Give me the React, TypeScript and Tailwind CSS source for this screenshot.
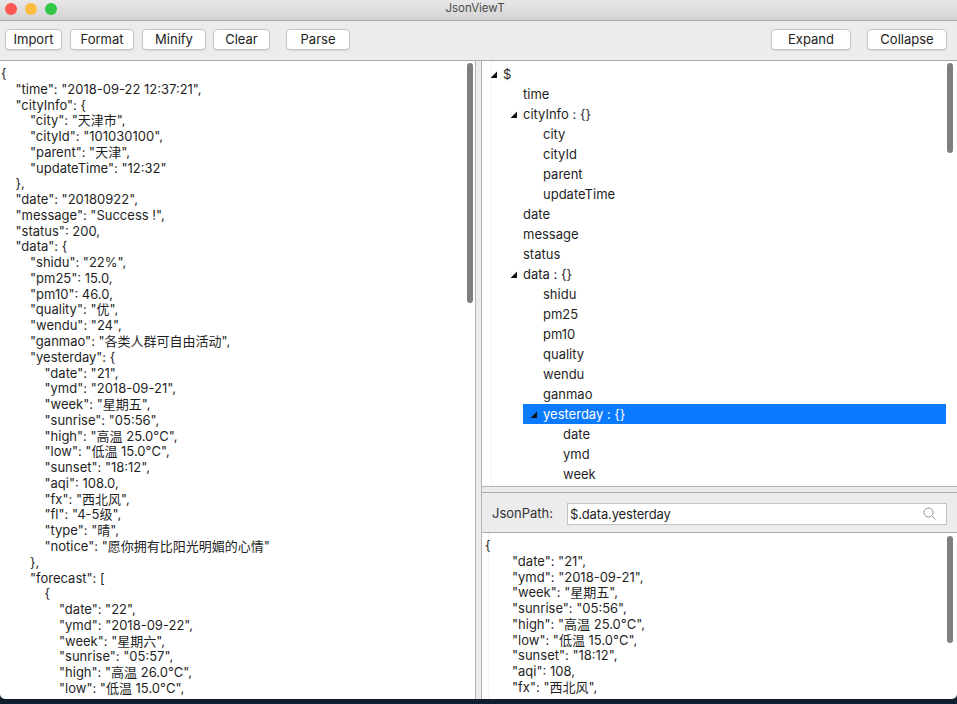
const font = "[font-family:'Inter','Noto_Sans_CJK_SC',sans-serif]";

const leftLines: [number, string][] = [
  [0, "{"],
  [1, '"time": "2018-09-22 12:37:21",'],
  [1, '"cityInfo": {'],
  [2, '"city": "天津市",'],
  [2, '"cityId": "101030100",'],
  [2, '"parent": "天津",'],
  [2, '"updateTime": "12:32"'],
  [1, "},"],
  [1, '"date": "20180922",'],
  [1, '"message": "Success !",'],
  [1, '"status": 200,'],
  [1, '"data": {'],
  [2, '"shidu": "22%",'],
  [2, '"pm25": 15.0,'],
  [2, '"pm10": 46.0,'],
  [2, '"quality": "优",'],
  [2, '"wendu": "24",'],
  [2, '"ganmao": "各类人群可自由活动",'],
  [2, '"yesterday": {'],
  [3, '"date": "21",'],
  [3, '"ymd": "2018-09-21",'],
  [3, '"week": "星期五",'],
  [3, '"sunrise": "05:56",'],
  [3, '"high": "高温 25.0°C",'],
  [3, '"low": "低温 15.0°C",'],
  [3, '"sunset": "18:12",'],
  [3, '"aqi": 108.0,'],
  [3, '"fx": "西北风",'],
  [3, '"fl": "4-5级",'],
  [3, '"type": "晴",'],
  [3, '"notice": "愿你拥有比阳光明媚的心情"'],
  [2, "},"],
  [2, '"forecast": ['],
  [3, "{"],
  [4, '"date": "22",'],
  [4, '"ymd": "2018-09-22",'],
  [4, '"week": "星期六",'],
  [4, '"sunrise": "05:57",'],
  [4, '"high": "高温 26.0°C",'],
  [4, '"low": "低温 15.0°C",'],
];

const treeRows: { depth: number; label: string; open?: boolean; selected?: boolean }[] = [
  { depth: 0, label: "$", open: true },
  { depth: 1, label: "time" },
  { depth: 1, label: "cityInfo : {}", open: true },
  { depth: 2, label: "city" },
  { depth: 2, label: "cityId" },
  { depth: 2, label: "parent" },
  { depth: 2, label: "updateTime" },
  { depth: 1, label: "date" },
  { depth: 1, label: "message" },
  { depth: 1, label: "status" },
  { depth: 1, label: "data : {}", open: true },
  { depth: 2, label: "shidu" },
  { depth: 2, label: "pm25" },
  { depth: 2, label: "pm10" },
  { depth: 2, label: "quality" },
  { depth: 2, label: "wendu" },
  { depth: 2, label: "ganmao" },
  { depth: 2, label: "yesterday : {}", open: true, selected: true },
  { depth: 3, label: "date" },
  { depth: 3, label: "ymd" },
  { depth: 3, label: "week" },
];

const pathLines = [
  "{",
  '"date": "21",',
  '"ymd": "2018-09-21",',
  '"week": "星期五",',
  '"sunrise": "05:56",',
  '"high": "高温 25.0°C",',
  '"low": "低温 15.0°C",',
  '"sunset": "18:12",',
  '"aqi": 108,',
  '"fx": "西北风",',
];

const ToolButton = ({ label, width, className = "" }: { label: string; width: string; className?: string }) => (
  <button
    className={`${width} ${className} h-[21px] shrink-0 rounded-[4px] border border-[#c4c4c4] bg-white text-[13px] leading-[19px] text-[#222] shadow-[0_1px_1px_rgba(0,0,0,0.08)]`}
  >
    {label}
  </button>
);

const Scrollbar = ({ height, top, right }: { height: string; top: string; right: string }) => (
  <div className={`absolute ${right} ${top} ${height} w-[6px] rounded-full bg-[#7f7f7f]`} />
);

const Arrow = () => (
  <svg width="8" height="8" viewBox="0 0 8 8" className="shrink-0">
    <polygon points="0.5,7 7,7 7,0.5" fill="#111" />
  </svg>
);

export default function App() {
  return (
    <div className={`${font} flex h-[704px] w-[957px] flex-col overflow-hidden bg-[#0f1f2e] text-[#1f1f1f]`}>
      <div className="flex h-[699px] flex-col overflow-hidden rounded-b-[5px] bg-white">
        {/* title bar */}
        <div className="relative flex h-[20px] shrink-0 items-center justify-center bg-gradient-to-b from-[#e8e8e8] to-[#d3d3d3] pb-[2px] pr-[7px] text-[11.5px] text-[#4d4d4d]">
          <div className="absolute left-[5px] top-[3px] flex gap-[8px]">
            <div className="h-[12px] w-[12px] rounded-full bg-[#fc5753]" />
            <div className="h-[12px] w-[12px] rounded-full bg-[#fdbc40]" />
            <div className="h-[12px] w-[12px] rounded-full bg-[#33c748]" />
          </div>
          JsonViewT
        </div>

        {/* toolbar */}
        <div className="flex h-[41px] shrink-0 items-center border-y border-[#a9a9a9] bg-[#ececec] pb-[3px] pl-[5px] pr-[10px]">
          <ToolButton label="Import" width="w-[57px]" />
          <ToolButton label="Format" width="w-[64px]" className="ml-[8px]" />
          <ToolButton label="Minify" width="w-[64px]" className="ml-[8px]" />
          <ToolButton label="Clear" width="w-[57px]" className="ml-[7px]" />
          <ToolButton label="Parse" width="w-[64px]" className="ml-[16px]" />
          <div className="flex-1" />
          <ToolButton label="Expand" width="w-[80px]" />
          <ToolButton label="Collapse" width="w-[80px]" className="ml-[16px]" />
        </div>

        <div className="flex min-h-0 flex-1">
          {/* left editor */}
          <div className="relative w-[476px] shrink-0 overflow-hidden border-r border-[#b5b5b5] pl-[1px] pt-[5px] text-[13px] leading-[15.77px]">
            {leftLines.map(([indent, text], i) => (
              <div key={i} className="flex h-[15.77px] whitespace-pre">
                {indent > 0 && <div className="w-[14.5px] shrink-0" />}
                {indent > 1 && <div className="w-[14.5px] shrink-0" />}
                {indent > 2 && <div className="w-[14.5px] shrink-0" />}
                {indent > 3 && <div className="w-[14.5px] shrink-0" />}
                {text}
              </div>
            ))}
            <Scrollbar top="top-[2px]" height="h-[240px]" right="right-[2px]" />
          </div>

          <div className="w-[5px] shrink-0 bg-[#ececec]" />

          {/* right column */}
          <div className="flex min-w-0 flex-1 flex-col border-l border-[#b5b5b5]">
            <div className="relative h-[426px] shrink-0 overflow-hidden border-b border-[#b5b5b5] pt-[3px] text-[13px]">
              <div className="absolute bottom-0 left-[9px] top-0 w-px bg-[#f3f3f3]" />
              {treeRows.map((row, i) => (
                <div
                  key={i}
                  className={`relative flex h-[20px] items-center pt-[1px] ${row.selected ? "mr-[11px] bg-[#0a7aff] text-white" : ""} ${
                    row.depth === 0 ? "ml-[8px]" : row.depth === 1 ? "ml-[28px]" : row.depth === 2 ? "ml-[41px]" : "ml-[61px]"
                  }`}
                >
                  <div
                    className={`flex shrink-0 items-center ${
                      row.depth === 2 ? "w-[20px] pl-[7px]" : row.depth === 3 ? "w-[20px]" : "w-[13px]"
                    }`}
                  >
                    {row.open && <Arrow />}
                  </div>
                  <span>{row.label}</span>
                </div>
              ))}
              <Scrollbar top="top-[2px]" height="h-[90px]" right="right-[4px]" />
            </div>

            <div className="h-[5px] shrink-0 bg-[#ececec]" />

            <div className="flex h-[41px] shrink-0 items-center border-y border-[#a9a9a9] bg-[#ececec] pl-[10px] pr-[10px] pt-[2px] text-[13px]">
              <span className="w-[75px] shrink-0 pt-[1px] text-[#333]">JsonPath:</span>
              <div className="flex h-[22px] flex-1 items-center justify-between border border-[#c2c2c2] bg-white pl-[2px] pr-[10px] text-[13px]">
                <span className="pt-[2px] tracking-[-0.15px]">$.data.yesterday</span>
                <svg width="13" height="13" viewBox="0 0 13 13" fill="none" stroke="#8f8f8f" strokeWidth="1">
                  <circle cx="5.5" cy="5.5" r="4.5" />
                  <path d="M9 9l3.5 3.5" />
                </svg>
              </div>
            </div>

            <div className="relative min-h-0 flex-1 overflow-hidden pl-[3px] pt-[5px] text-[13px] leading-[15.77px]">
              <div className="absolute bottom-0 left-[6px] top-0 w-px bg-[#f3f3f3]" />
              {pathLines.map((line, i) => (
                <div key={i} className={`relative h-[15.77px] whitespace-pre ${i > 0 ? "pl-[27px]" : ""}`}>
                  {line}
                </div>
              ))}
              <Scrollbar top="top-[3px]" height="h-[107px]" right="right-[4px]" />
            </div>
          </div>
        </div>
      </div>
    </div>
  );
}
